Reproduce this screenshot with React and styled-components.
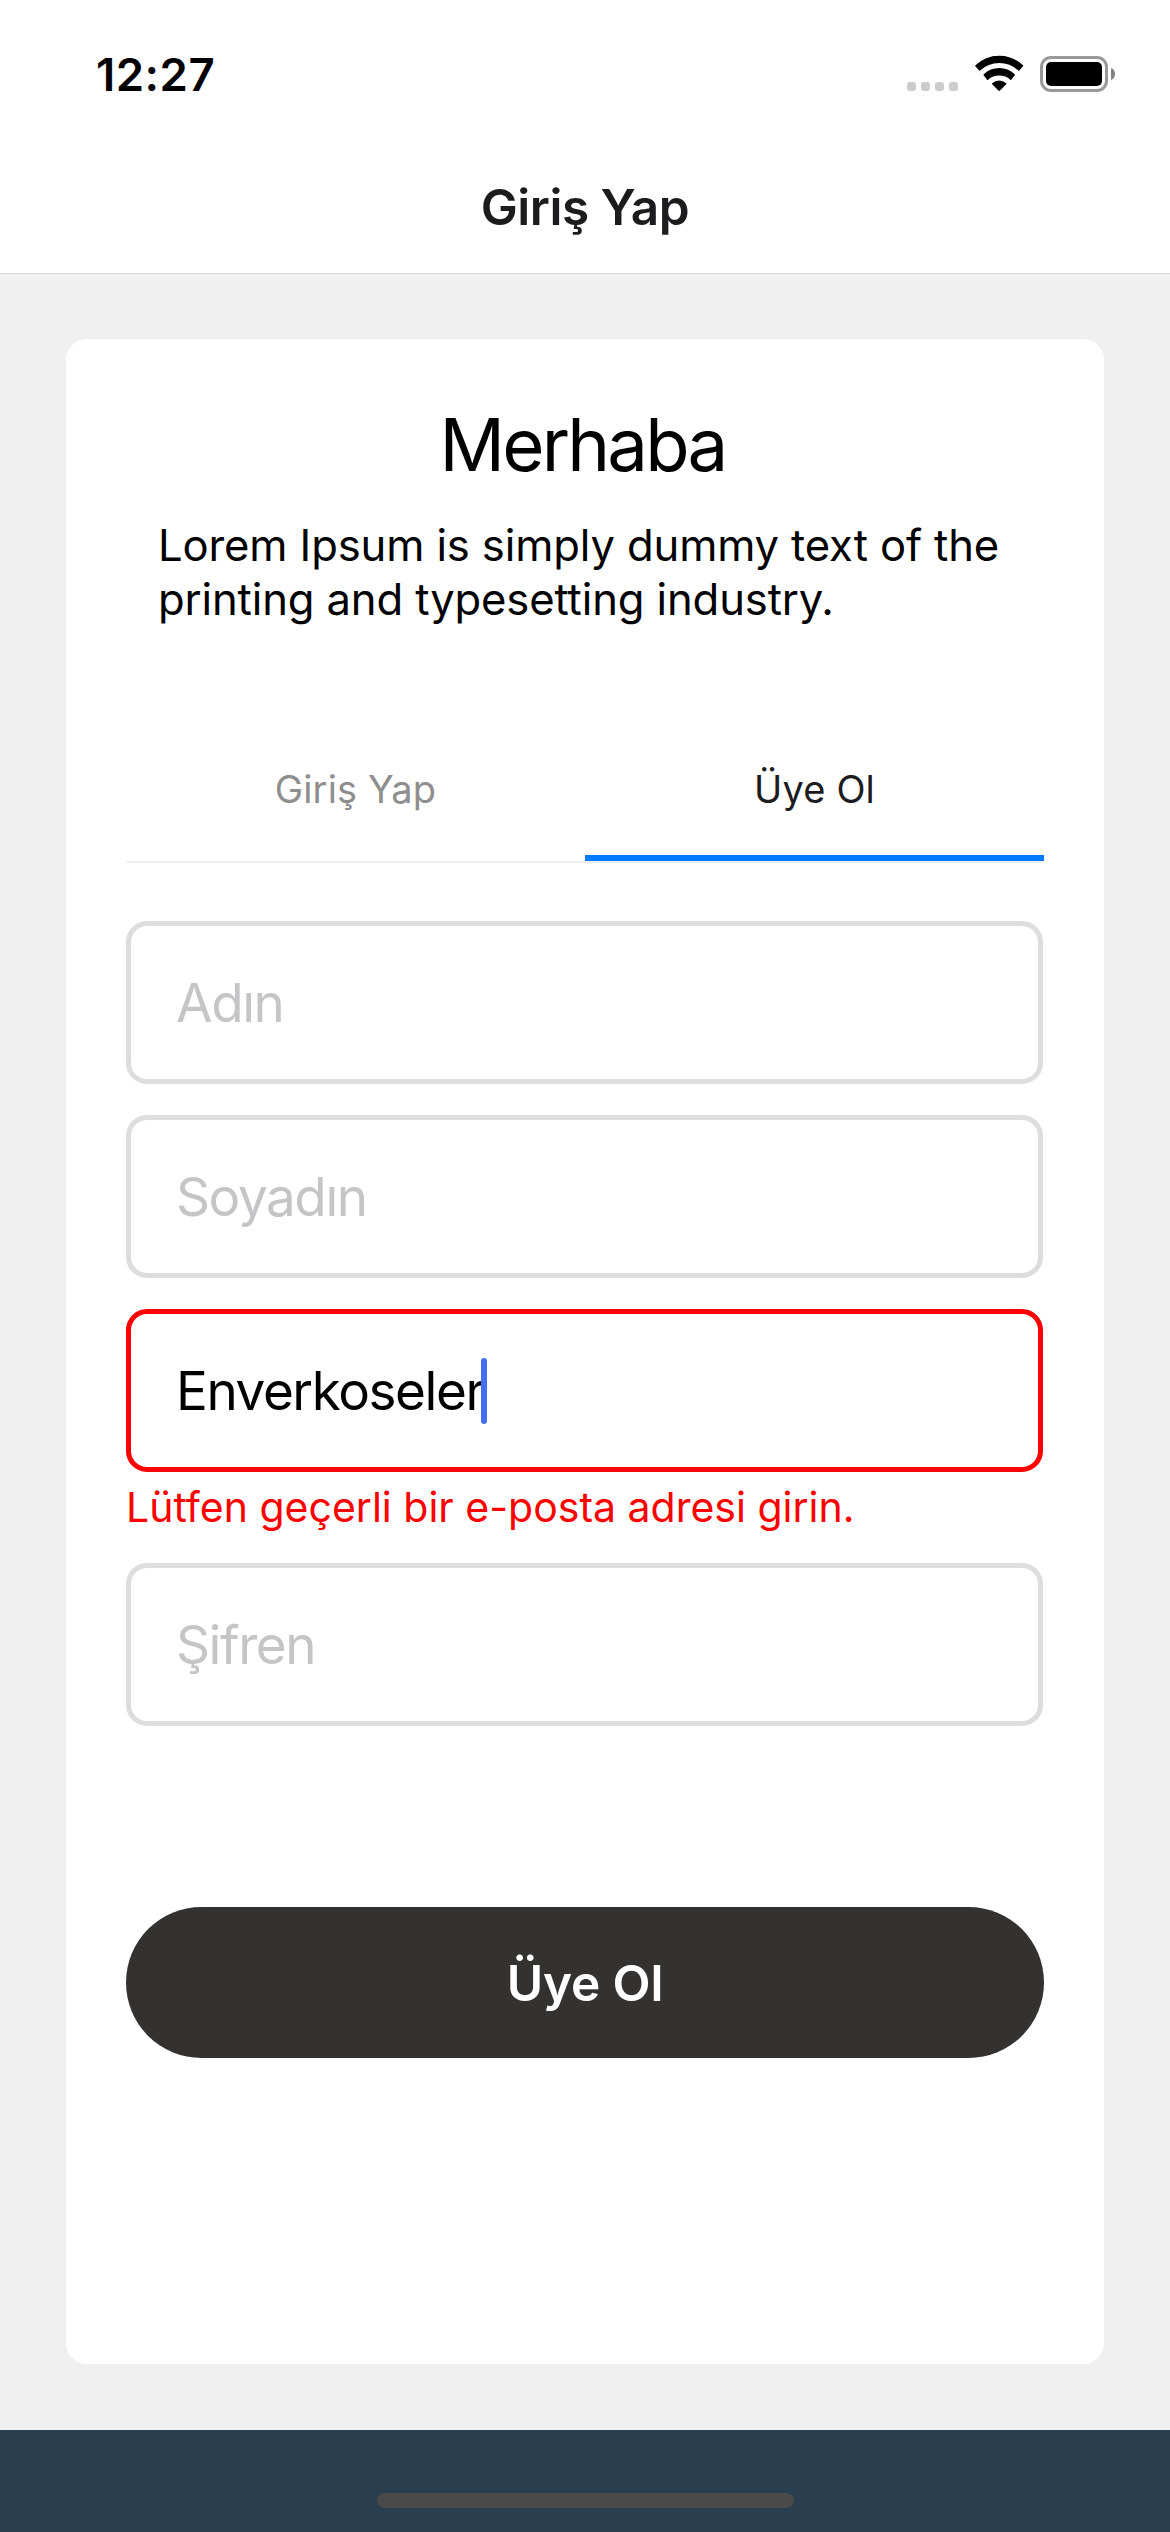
import React from "react";
import styled, { createGlobalStyle } from "styled-components";

const GlobalStyle = createGlobalStyle`
  *, *::before, *::after { box-sizing: border-box; }
  html, body { margin: 0; padding: 0; }
  body {
    background: #f0f0f0;
    color: #000;
    font-family: Inter, "Liberation Sans", sans-serif;
  }
`;

const Screen = styled.div`
  display: flex;
  flex-direction: column;
  width: 1170px;
  height: 2532px;
  overflow: hidden;
  background: #f0f0f0;
`;

const StatusBar = styled.div`
  display: flex;
  align-items: center;
  justify-content: space-between;
  flex: none;
  height: 141px;
  padding: 8px 55px 0 96px;
  background: #fff;
`;

const Clock = styled.time`
  font-size: 45.5px;
  font-weight: 600;
  line-height: 60px;
  letter-spacing: 0.5px;
`;

const StatusIcons = styled.div`
  display: flex;
  align-items: center;

  svg { display: block; }
  svg + svg { margin-left: 16px; }
`;

const Header = styled.header`
  display: flex;
  align-items: center;
  justify-content: center;
  flex: none;
  height: 133px;
  border-bottom: 1px solid #d8d8d8;
  background: #fff;
`;

const HeaderTitle = styled.h1`
  margin: 0;
  color: #1c1c1e;
  font-size: 49.5px;
  font-weight: 600;
  line-height: 64px;
  letter-spacing: -0.5px;
`;

const Main = styled.main`
  display: flex;
  flex: 1;
  padding: 65px 66px 66px;
`;

const Card = styled.section`
  display: flex;
  flex: 1;
  flex-direction: column;
  padding: 61px 60px 0;
  border-radius: 21px;
  background: #fff;
`;

const Greeting = styled.h2`
  margin: 0;
  padding-right: 5px;
  font-size: 72.5px;
  font-weight: 400;
  line-height: 90px;
  letter-spacing: -2.8px;
  text-align: center;
`;

const Intro = styled.p`
  margin: 29px 0 0;
  padding: 0 30px 0 32px;
  font-size: 43.6px;
  line-height: 54px;
  letter-spacing: -0.13px;
`;

const Tabs = styled.div`
  display: flex;
  flex: none;
  margin-top: 90px;
  border-bottom: 2px solid #f0f0f0;
`;

const Tab = styled.div`
  display: flex;
  flex: 1;
  align-items: center;
  justify-content: center;
  height: 144px;
  padding-top: 6px;
  border-bottom: 6px solid ${({ $active }) => ($active ? "#007aff" : "transparent")};
  color: ${({ $active }) => ($active ? "#1c1c1e" : "#8e8e8f")};
  font-size: 38px;
  letter-spacing: 0.15px;
`;

const Form = styled.div`
  display: flex;
  flex-direction: column;
  gap: 31px;
  margin-top: 58px;
`;

const Field = styled.div`
  padding-right: 1px;
`;

const InputBox = styled.div`
  display: flex;
  align-items: center;
  height: 163px;
  padding: 0 45px;
  border: 5px solid ${({ $invalid }) => ($invalid ? "#ff0000" : "#dddddd")};
  border-radius: 21px;
  background: #fff;
`;

const InputText = styled.span`
  color: ${({ $placeholder }) => ($placeholder ? "#c5c5c7" : "#000")};
  font-size: 53px;
  line-height: 66px;
  letter-spacing: -1.42px;
`;

const Caret = styled.span`
  width: 6px;
  height: 66px;
  margin-left: -3px;
  border-radius: 3px;
  background: #446df0;
`;

const ErrorText = styled.div`
  height: 60px;
  padding-top: 10px;
  color: #ff0000;
  font-size: 41px;
  line-height: 50px;
  white-space: nowrap;
`;

const SubmitButton = styled.button`
  display: flex;
  align-items: center;
  justify-content: center;
  flex: none;
  height: 151px;
  margin: 181px 0 0;
  padding: 0;
  border: 0;
  border-radius: 76px;
  background: #333230;
  color: #fff;
  font-family: inherit;
  font-size: 49.5px;
  font-weight: 600;
  letter-spacing: -0.15px;
`;

const Footer = styled.footer`
  display: flex;
  align-items: flex-end;
  justify-content: center;
  flex: none;
  height: 102px;
  padding-bottom: 24px;
  background: #293f4f;
`;

const HomeIndicator = styled.div`
  width: 417px;
  height: 15px;
  border-radius: 8px;
  background: #4a4a4a;
`;

const fields = [
  { id: "name", placeholder: "Adın" },
  { id: "surname", placeholder: "Soyadın" },
  {
    id: "email",
    value: "Enverkoseler",
    focused: true,
    error: "Lütfen geçerli bir e-posta adresi girin.",
  },
  { id: "password", placeholder: "Şifren" },
];

function SignalDots() {
  return (
    <svg width="52" height="39" viewBox="0 0 52 39" fill="#cccccc">
      {[0, 14, 28, 42].map((x) => (
        <rect key={x} x={x} y="27" width="9" height="9" rx="3" />
      ))}
    </svg>
  );
}

function WifiIcon() {
  return (
    <svg width="49" height="39" viewBox="0 0 49 39" stroke="#000" strokeWidth="1.4" strokeLinejoin="round">
      <path d="M0.9 10.8A33.5 33.5 0 0 1 47.5 10.8L43.8 15A28.6 28.6 0 0 0 4.6 15Z" />
      <path d="M9.2 19.8A21.8 21.8 0 0 1 39.2 19.8L35.8 24.2A17.6 17.6 0 0 0 12.6 24.2Z" />
      <path d="M17.7 28.7A9.6 9.6 0 0 1 30.7 28.7L24.2 35.2Z" />
    </svg>
  );
}

function BatteryIcon() {
  return (
    <svg width="75" height="39" viewBox="0 0 75 39">
      <rect x="1.5" y="2.5" width="65" height="33" rx="9.5" fill="none" stroke="#999999" strokeWidth="3" />
      <rect x="6" y="7" width="56" height="24" rx="5" fill="#000" />
      <path d="M71 13C73.6 13.8 75 16.2 75 19S73.6 24.2 71 25Z" fill="#808080" />
    </svg>
  );
}

function FormField({ placeholder, value, focused, error }) {
  return (
    <Field>
      <InputBox $invalid={Boolean(error)}>
        <InputText $placeholder={!value}>{value || placeholder}</InputText>
        {focused && <Caret />}
      </InputBox>
      {error && <ErrorText>{error}</ErrorText>}
    </Field>
  );
}

export default function App() {
  return (
    <>
      <GlobalStyle />
      <Screen>
        <StatusBar>
          <Clock>12:27</Clock>
          <StatusIcons>
            <SignalDots />
            <WifiIcon />
            <BatteryIcon />
          </StatusIcons>
        </StatusBar>
        <Header>
          <HeaderTitle>Giriş Yap</HeaderTitle>
        </Header>
        <Main>
          <Card>
            <Greeting>Merhaba</Greeting>
            <Intro>Lorem Ipsum is simply dummy text of the printing and typesetting industry.</Intro>
            <Tabs>
              <Tab>Giriş Yap</Tab>
              <Tab $active>Üye Ol</Tab>
            </Tabs>
            <Form>
              {fields.map((field) => (
                <FormField key={field.id} {...field} />
              ))}
            </Form>
            <SubmitButton type="button">Üye Ol</SubmitButton>
          </Card>
        </Main>
        <Footer>
          <HomeIndicator />
        </Footer>
      </Screen>
    </>
  );
}
